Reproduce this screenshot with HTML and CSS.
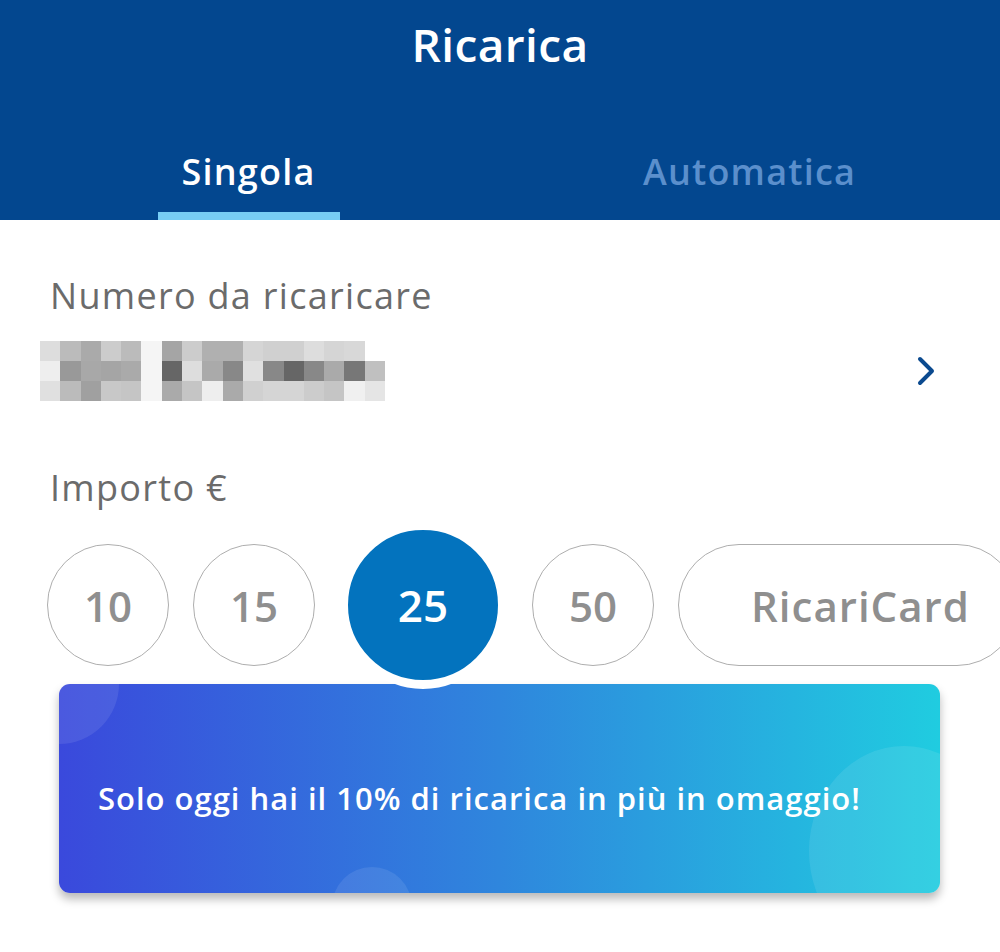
FILE: index.html
```html
<!DOCTYPE html>
<html lang="it">
<head>
    <meta charset="UTF-8">
    <meta name="viewport" content="width=device-width, initial-scale=1.0">
    <title>Ricarica</title>
    <link rel="stylesheet" href="styles.css">
</head>
<body>
    <header class="topbar">
        <h1 class="title">Ricarica</h1>
        <nav class="tabs">
            <div class="tab active">
                <span class="tab-label">Singola</span>
                <span class="tab-line"></span>
            </div>
            <div class="tab">
                <span class="tab-label">Automatica</span>
                <span class="tab-line"></span>
            </div>
        </nav>
    </header>

    <main class="content">
        <p class="field-label">Numero da ricaricare</p>
        <div class="number-row">
            <div class="blurred" id="blurred"></div>
            <svg class="chevron" width="24" height="34" viewBox="0 0 24 34">
                <path d="M6 5 L18 17 L6 29" fill="none" stroke="#0b4a8f" stroke-width="4" stroke-linecap="round" stroke-linejoin="round"/>
            </svg>
        </div>

        <p class="field-label amount-label">Importo €</p>
        <div class="amounts">
            <button class="amount">10</button>
            <button class="amount">15</button>
            <button class="amount selected">25</button>
            <button class="amount">50</button>
            <button class="amount pill">RicariCard</button>
        </div>

        <div class="promo">
            <span class="bubble bubble-tl"></span>
            <span class="bubble bubble-bottom"></span>
            <span class="bubble bubble-right"></span>
            <p class="promo-text">Solo oggi hai il 10% di ricarica in più in omaggio!</p>
        </div>
    </main>

    <script>
        // pixelated phone number, grey levels per cell (3 rows x 17 cols)
        const cells = [
            [221, 187, 170, 204, 187, 245, 165, 204, 176, 176, 213, 208, 208, 221, 213, 216, 255],
            [238, 153, 168, 165, 170, 245, 102, 221, 170, 136, 224, 136, 102, 136, 170, 119, 192],
            [224, 187, 160, 200, 197, 245, 170, 197, 238, 170, 208, 213, 213, 204, 197, 240, 229]
        ];
        const grid = document.getElementById("blurred");
        cells.forEach(row => {
            row.forEach(g => {
                const cell = document.createElement("span");
                cell.className = "px";
                cell.style.background = `rgb(${g},${g},${g})`;
                grid.appendChild(cell);
            });
        });
    </script>
</body>
</html>
```

FILE: styles.css
```css
body {
    margin: 0;
    padding: 0;
    width: 1000px;
    height: 952px;
    background: #fff;
    font-family: 'Open Sans', Lato, sans-serif;
    overflow: hidden;
}

.topbar {
    background: #03478f;
    height: 220px;
    display: flex;
    flex-direction: column;
}

.title {
    margin: 0;
    padding-top: 19px;
    text-align: center;
    color: #fff;
    font-size: 46px;
    line-height: 50px;
    letter-spacing: 0.4px;
    font-weight: 600;
}

.tabs {
    margin-top: auto;
    display: flex;
}

.tab {
    flex: 1;
    display: flex;
    flex-direction: column;
    align-items: center;
}

.tab-label {
    font-size: 36px;
    line-height: 50px;
    letter-spacing: 1.2px;
    font-weight: 600;
    color: #5b8fcc;
}

.tab-line {
    display: block;
    height: 8px;
    margin-top: 15px;
    width: 182px;
}

.tab.active {
    margin-left: -2px;
}

.tab.active .tab-label {
    color: #fff;
}

.tab.active .tab-line {
    background: #77cdf4;
}

.content {
    padding: 0 0 0 50px;
}

.field-label {
    margin: 0;
    padding-top: 52px;
    font-size: 36px;
    line-height: 48px;
    letter-spacing: 1.3px;
    color: #6b6b6b;
}

.number-row {
    display: flex;
    align-items: center;
    justify-content: space-between;
    padding-right: 62px;
    margin-top: 20px;
    height: 62px;
}

.blurred {
    display: grid;
    grid-template-columns: repeat(17, 20.3px);
    grid-template-rows: repeat(3, 20.3px);
    margin-left: -10px;
}

.px {
    display: block;
}

.amount-label {
    padding-top: 62px;
}

.amounts {
    display: flex;
    align-items: center;
    gap: 24px;
    margin-top: 9px;
    margin-left: -3px;
    height: 168px;
    position: relative;
    z-index: 2;
}

.amount {
    width: 122px;
    height: 122px;
    border-radius: 61px;
    border: 1.5px solid #aeaeae;
    background: #fff;
    font-family: 'Open Sans', Lato, sans-serif;
    font-size: 42px;
    font-weight: 600;
    color: #8f8f8f;
    padding: 0;
    flex-shrink: 0;
}

.amount.selected {
    width: 168px;
    height: 168px;
    border-radius: 84px;
    border: 9px solid #fff;
    background: #0373be;
    color: #fff;
    font-size: 44px;
    margin: 0 1px 0 0;
}

.amount.pill {
    width: 340px;
    text-align: left;
    padding-left: 72px;
    letter-spacing: 1px;
}

.promo {
    position: relative;
    overflow: hidden;
    margin: -5px 0 0 9px;
    width: 881px;
    height: 209px;
    border-radius: 11px;
    background: linear-gradient(90deg, #3a49dc 0%, #2f86dd 50%, #20cce0 100%);
    box-shadow: 0 6px 10px rgba(0, 0, 0, 0.28);
    display: flex;
    align-items: center;
}

.bubble {
    position: absolute;
    border-radius: 50%;
    background: rgba(255, 255, 255, 0.09);
}

.bubble-tl {
    width: 120px;
    height: 120px;
    left: -60px;
    top: -60px;
}

.bubble-bottom {
    width: 80px;
    height: 80px;
    left: 273px;
    top: 183px;
}

.bubble-right {
    width: 190px;
    height: 210px;
    left: 750px;
    top: 62px;
}

.promo-text {
    position: relative;
    margin: 0 0 0 39px;
    color: #fff;
    font-size: 31px;
    letter-spacing: 1px;
    font-weight: 600;
    padding-top: 18px;
}
```
